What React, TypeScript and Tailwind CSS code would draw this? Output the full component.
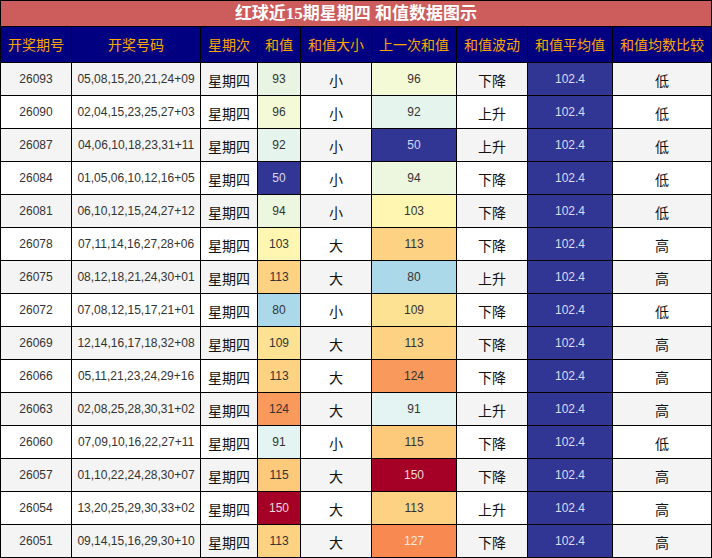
const cols = "grid grid-cols-[70px_128px_56px_42px_70px_84px_70px_84px_98px] gap-px";

const heads = ["开奖期号", "开奖号码", "星期次", "和值", "和值大小", "上一次和值", "和值波动", "和值平均值", "和值均数比较"];

const rows: [string, string, number, string, number, string, string][] = [
  ["26093", "05,08,15,20,21,24+09", 93, "小", 96, "下降", "低"],
  ["26090", "02,04,15,23,25,27+03", 96, "小", 92, "上升", "低"],
  ["26087", "04,06,10,18,23,31+11", 92, "小", 50, "上升", "低"],
  ["26084", "01,05,06,10,12,16+05", 50, "小", 94, "下降", "低"],
  ["26081", "06,10,12,15,24,27+12", 94, "小", 103, "下降", "低"],
  ["26078", "07,11,14,16,27,28+06", 103, "大", 113, "下降", "高"],
  ["26075", "08,12,18,21,24,30+01", 113, "大", 80, "上升", "高"],
  ["26072", "07,08,12,15,17,21+01", 80, "小", 109, "下降", "低"],
  ["26069", "12,14,16,17,18,32+08", 109, "大", 113, "下降", "高"],
  ["26066", "05,11,21,23,24,29+16", 113, "大", 124, "下降", "高"],
  ["26063", "02,08,25,28,30,31+02", 124, "大", 91, "上升", "高"],
  ["26060", "07,09,10,16,22,27+11", 91, "小", 115, "下降", "低"],
  ["26057", "01,10,22,24,28,30+07", 115, "大", 150, "下降", "高"],
  ["26054", "13,20,25,29,30,33+02", 150, "大", 113, "上升", "高"],
  ["26051", "09,14,15,16,29,30+10", 113, "大", 127, "下降", "高"],
];

// heat colours for the sums (reversed red-yellow-blue)
const heat: Record<number, string> = {
  50: "bg-[#313695] text-[#d8d8ee]",
  80: "bg-[#abd9e9] text-[#333]",
  91: "bg-[#e3f4f2] text-[#333]",
  92: "bg-[#e5f4ec] text-[#333]",
  93: "bg-[#e9f5e2] text-[#333]",
  94: "bg-[#edf7df] text-[#333]",
  96: "bg-[#f4fad6] text-[#333]",
  103: "bg-[#fff6b1] text-[#333]",
  109: "bg-[#fee293] text-[#333]",
  113: "bg-[#fed283] text-[#333]",
  115: "bg-[#fdc97b] text-[#333]",
  124: "bg-[#f9995b] text-[#333]",
  127: "bg-[#f88950] text-[#fbe9e0]",
  150: "bg-[#a50026] text-[#f0d8dc]",
};

const num = "font-['Liberation_Sans',sans-serif] text-[12px]";
const cjk = "font-['Noto_Sans_CJK_SC',sans-serif] text-[14px] text-[#111]";

export default function App() {
  return (
    <div className="w-[712px] h-[558px] bg-black p-px flex flex-col gap-px">
      <div className="h-[25px] bg-[#cd5c5c] flex items-center justify-center text-white font-bold text-[17px] font-['Liberation_Serif','Noto_Sans_CJK_SC',serif]">
        红球近15期星期四 和值数据图示
      </div>
      <div className={`${cols} h-[35px]`}>
        {heads.map((h) => (
          <div key={h} className="bg-[#000080] text-[#ffa500] flex items-center justify-center text-[14px] font-['Noto_Sans_CJK_SC',sans-serif]">
            {h}
          </div>
        ))}
      </div>
      {rows.map(([id, nums, sum, size, prev, trend, cmp], i) => {
        const bg = i % 2 === 0 ? "bg-[#f4f4f4]" : "bg-white";
        return (
          <div key={id} className={`${cols} h-[32px]`}>
            <div className={`${bg} ${num} text-[#333] flex items-center justify-center`}>{id}</div>
            <div className={`${bg} ${num} text-[#333] flex items-center justify-center`}>{nums}</div>
            <div className={`${bg} ${cjk} flex items-center justify-center pt-[3px]`}>星期四</div>
            <div className={`${heat[sum]} ${num} flex items-center justify-center`}>{sum}</div>
            <div className={`${bg} ${cjk} flex items-center justify-center pt-[3px]`}>{size}</div>
            <div className={`${heat[prev]} ${num} flex items-center justify-center`}>{prev}</div>
            <div className={`${bg} ${cjk} flex items-center justify-center pt-[3px]`}>{trend}</div>
            <div className={`bg-[#313695] text-[#dcdcf0] ${num} flex items-center justify-center`}>102.4</div>
            <div className={`${bg} ${cjk} flex items-center justify-center pt-[3px]`}>{cmp}</div>
          </div>
        );
      })}
    </div>
  );
}
